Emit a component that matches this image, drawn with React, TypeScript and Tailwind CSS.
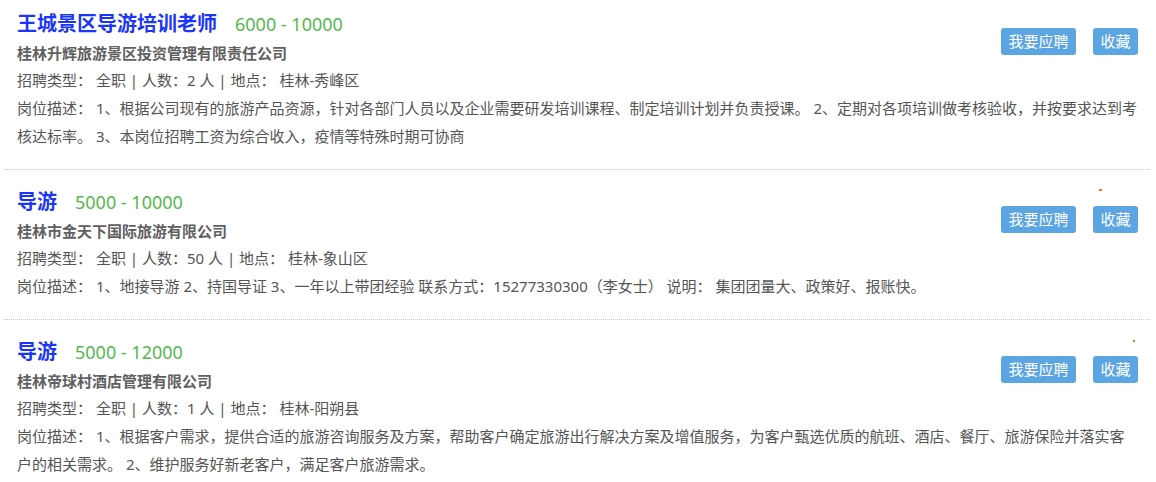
import React from "react";

type Job = {
  title: string;
  salary: string;
  company: string;
  count: string;
  place: string;
  desc: string;
  dot?: "a" | "b";
};

const jobs: Job[] = [
  {
    title: "王城景区导游培训老师",
    salary: "6000 - 10000",
    company: "桂林升辉旅游景区投资管理有限责任公司",
    count: "2",
    place: "桂林-秀峰区",
    desc: "1、根据公司现有的旅游产品资源，针对各部门人员以及企业需要研发培训课程、制定培训计划并负责授课。 2、定期对各项培训做考核验收，并按要求达到考核达标率。 3、本岗位招聘工资为综合收入，疫情等特殊时期可协商",
  },
  {
    title: "导游",
    salary: "5000 - 10000",
    company: "桂林市金天下国际旅游有限公司",
    count: "50",
    place: "桂林-象山区",
    desc: "1、地接导游 2、持国导证 3、一年以上带团经验 联系方式：15277330300（李女士） 说明： 集团团量大、政策好、报账快。",
    dot: "a",
  },
  {
    title: "导游",
    salary: "5000 - 12000",
    company: "桂林帝球村酒店管理有限公司",
    count: "1",
    place: "桂林-阳朔县",
    desc: "1、根据客户需求，提供合适的旅游咨询服务及方案，帮助客户确定旅游出行解决方案及增值服务，为客户甄选优质的航班、酒店、餐厅、旅游保险并落实客户的相关需求。 2、维护服务好新老客户，满足客户旅游需求。",
    dot: "b",
  },
];

function JobItem({ job, first }: { job: Job; first?: boolean }) {
  return (
    <div
      className={`relative border-b border-dotted border-[#c8c8c8] pl-[13px] pr-[11px] pb-[19px] ${
        first ? "pt-[8px]" : "pt-[16px]"
      }`}
    >
      {job.dot === "a" && (
        <span className="absolute top-[19px] right-[48px] h-[2px] w-[3px] bg-[#e8742a]" />
      )}
      {job.dot === "b" && (
        <span className="absolute top-[20px] right-[15px] h-[2px] w-[2px] bg-[#e8742a]" />
      )}
      <div className="float-right mt-[20px] mr-[1px] flex gap-[17px]">
        <button className="h-[27px] w-[75px] rounded-[3px] bg-[#5ba5e2] text-center text-[15px] leading-[27px] text-white">
          我要应聘
        </button>
        <button className="h-[27px] w-[45px] rounded-[3px] bg-[#5ba5e2] text-center text-[15px] leading-[27px] text-white">
          收藏
        </button>
      </div>
      <div className="h-[32px] leading-[32px]">
        <span className="text-[20px] font-bold text-[#1b36f8]">{job.title}</span>
        <span className="ml-[18px] text-[18px] text-[#55b84f]">{job.salary}</span>
      </div>
      <div className="text-[15px] font-bold leading-[26px] text-[#606060]">{job.company}</div>
      <div className="text-[15px] leading-[28px] text-[#555]">
        {`招聘类型： 全职 | 人数：${job.count} 人 | 地点： ${job.place}`}
      </div>
      <div className="text-[15px] leading-[28px] text-[#555]">{`岗位描述： ${job.desc}`}</div>
    </div>
  );
}

export default function App() {
  return (
    <div
      className="h-[482px] w-[1156px] overflow-hidden bg-white"
      style={{ fontFamily: '"Noto Sans", "Noto Sans CJK SC", sans-serif' }}
    >
      <div className="ml-[4px] mr-[6px]">
        {jobs.map((j, i) => (
          <JobItem key={i} job={j} first={i === 0} />
        ))}
      </div>
    </div>
  );
}
